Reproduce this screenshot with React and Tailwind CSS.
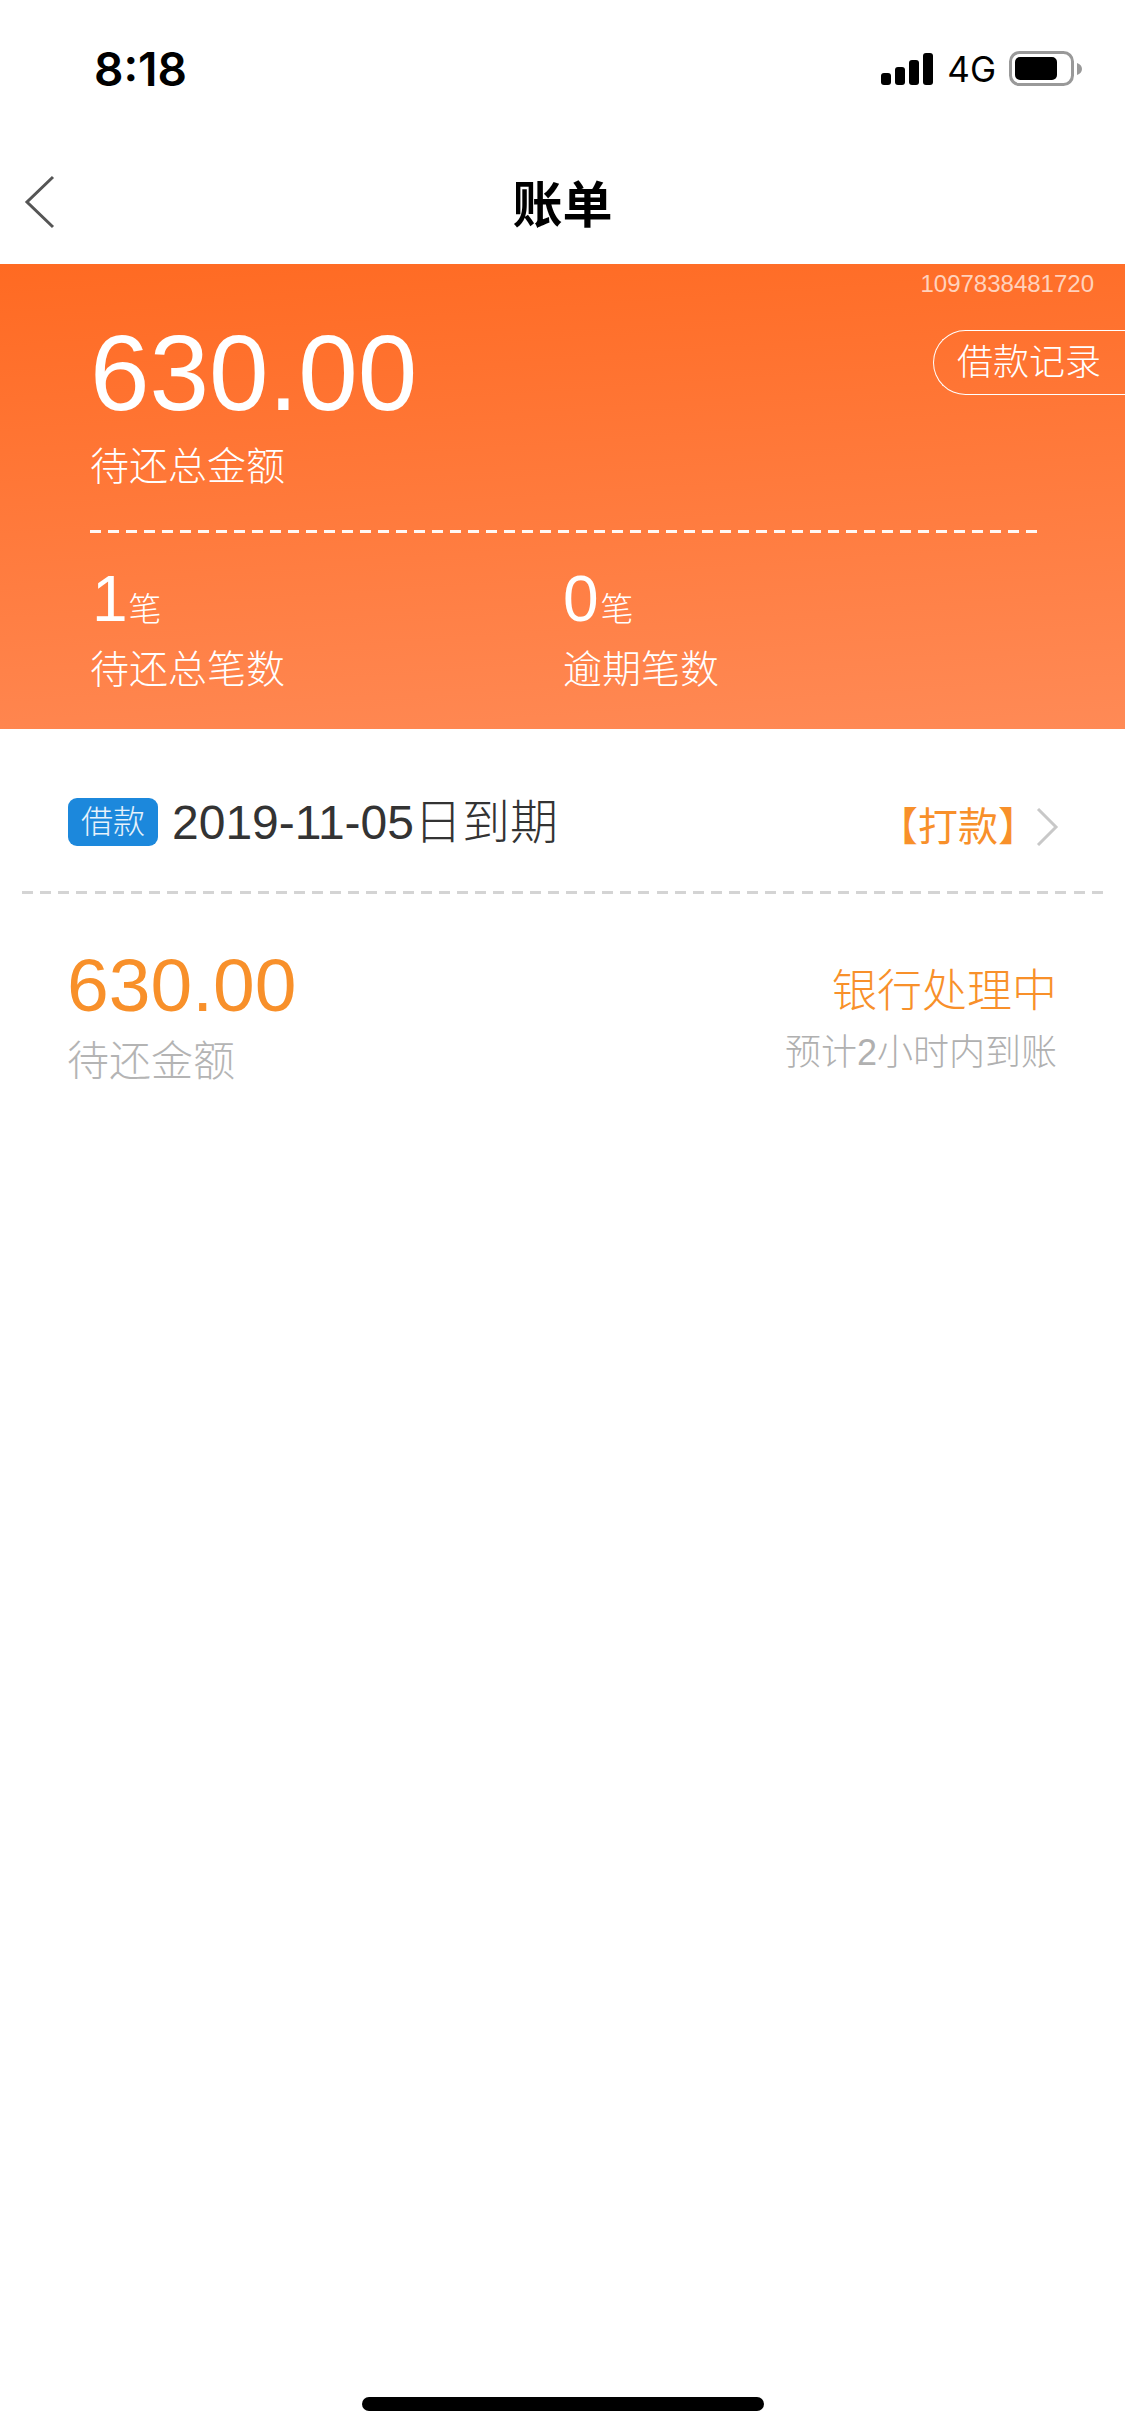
const sans = 'font-["Liberation_Sans","Noto_Sans_CJK_SC",sans-serif]';

function StatusBar() {
  return (
    <div className="flex items-center justify-between h-[138px] pl-[94px] pr-[42px]">
      <span className='font-["Inter",sans-serif] text-[46px] leading-none font-semibold text-black'>8:18</span>
      <div className="flex items-center">
        <svg width="52" height="32" viewBox="0 0 52 32" fill="#000">
          <rect x="0" y="20" width="10" height="12" rx="3" />
          <rect x="14" y="14" width="10" height="18" rx="3" />
          <rect x="28" y="7" width="10" height="25" rx="3" />
          <rect x="42" y="0" width="10" height="32" rx="3" />
        </svg>
        <span className='ml-[14px] font-["Inter",sans-serif] text-[35px] leading-none text-black'>4G</span>
        <svg className="ml-[13px]" width="74" height="36" viewBox="0 0 74 36">
          <rect x="1.5" y="1.5" width="62" height="32" rx="9" fill="none" stroke="#999" strokeWidth="3" />
          <rect x="6" y="6" width="42" height="23" rx="5" fill="#000" />
          <path d="M68 12c3 1 5 3 5 6s-2 5-5 6z" fill="#999" />
        </svg>
      </div>
    </div>
  );
}

function Header() {
  return (
    <div className="relative flex items-center justify-center h-[126px] pt-[10px]">
      <svg className="absolute left-[24px] top-[37px]" width="32" height="54" viewBox="0 0 32 54" fill="none" stroke="#555" strokeWidth="3">
        <path d="M29 2 3 27l26 25" />
      </svg>
      <h1 className="text-[50px] leading-none font-bold text-black">账单</h1>
    </div>
  );
}

function Summary() {
  return (
    <section className="relative h-[465px] pl-[90px] pt-[56px] text-white bg-[linear-gradient(176deg,#ff6a22_0%,#ff8a56_100%)]">
      <span className="absolute right-[31px] top-[6px] text-[24px] leading-[28px] text-white/70">1097838481720</span>
      <a className="absolute right-0 top-[66px] flex items-center h-[65px] pl-[23px] pr-[24px] border-[1.5px] border-r-0 border-white rounded-l-[33px] text-[36px] leading-none font-light">借款记录</a>
      <div className="text-[107px] leading-[106px]">630.00</div>
      <div className="mt-[19px] text-[39px] leading-[44px] font-light">待还总金额</div>
      <div className="mt-[41px] w-[947px] h-[3px] bg-[repeating-linear-gradient(90deg,rgba(255,255,255,0.95)_0,rgba(255,255,255,0.95)_11px,transparent_11px,transparent_18px)]" />
      <div className="flex mt-[37px]">
        <div className="w-[473px]">
          <div className="flex items-end h-[58px] pl-[2px]">
            <span className="text-[64px] leading-[58px]">1</span>
            <span className="ml-[1px] text-[33px] leading-[36px] font-light">笔</span>
          </div>
          <div className="mt-[20px] text-[39px] leading-[44px] font-light">待还总笔数</div>
        </div>
        <div>
          <div className="flex items-end h-[58px]">
            <span className="text-[64px] leading-[58px]">0</span>
            <span className="ml-[2px] text-[33px] leading-[36px] font-light">笔</span>
          </div>
          <div className="mt-[20px] text-[39px] leading-[44px] font-light">逾期笔数</div>
        </div>
      </div>
    </section>
  );
}

function BillRow() {
  return (
    <section>
      <div className="flex items-center justify-between h-[162px] pl-[68px] pr-[66px] pt-[24px]">
        <div className="flex items-center">
          <span className="flex items-center justify-center w-[90px] h-[48px] rounded-[9px] bg-[#1c88dc] text-[32px] leading-none text-white/90 font-light">借款</span>
          <span className="ml-[14px] mt-[2px] text-[48px] leading-none text-[#333] font-light">2019-11-05日到期</span>
        </div>
        <div className="flex items-center mt-[10px]">
          <span className="text-[40px] leading-none text-[#f8902a]">【打款】</span>
          <svg className="-ml-[3px]" width="24" height="38" viewBox="0 0 24 38" fill="none" stroke="#c8c8c8" strokeWidth="3">
            <path d="M3 1l18 18L3 37" />
          </svg>
        </div>
      </div>
      <div className="mx-[22px] h-[3px] bg-[repeating-linear-gradient(90deg,#d4d4d4_0,#d4d4d4_11px,transparent_11px,transparent_18.13px)]" />
      <div className="flex justify-between pl-[67px] pr-[68px] pt-[49px]">
        <div>
          <div className="text-[75px] leading-[84px] text-[#f8902a]">630.00</div>
          <div className="mt-[11px] text-[42px] leading-[48px] text-[#b4b4b4] font-light">待还金额</div>
        </div>
        <div className="flex flex-col items-end pt-[24px]">
          <div className="text-[45px] leading-[50px] text-[#f8902a] font-light">银行处理中</div>
          <div className="mt-[16px] text-[36px] leading-[40px] text-[#b0b0b0] font-light">预计2小时内到账</div>
        </div>
      </div>
    </section>
  );
}

export default function App() {
  return (
    <div className={`flex flex-col min-h-[2436px] bg-white ${sans}`}>
      <StatusBar />
      <Header />
      <Summary />
      <BillRow />
      <div className="mt-auto mb-[25px] mx-auto w-[402px] h-[14px] rounded-full bg-black" />
    </div>
  );
}
